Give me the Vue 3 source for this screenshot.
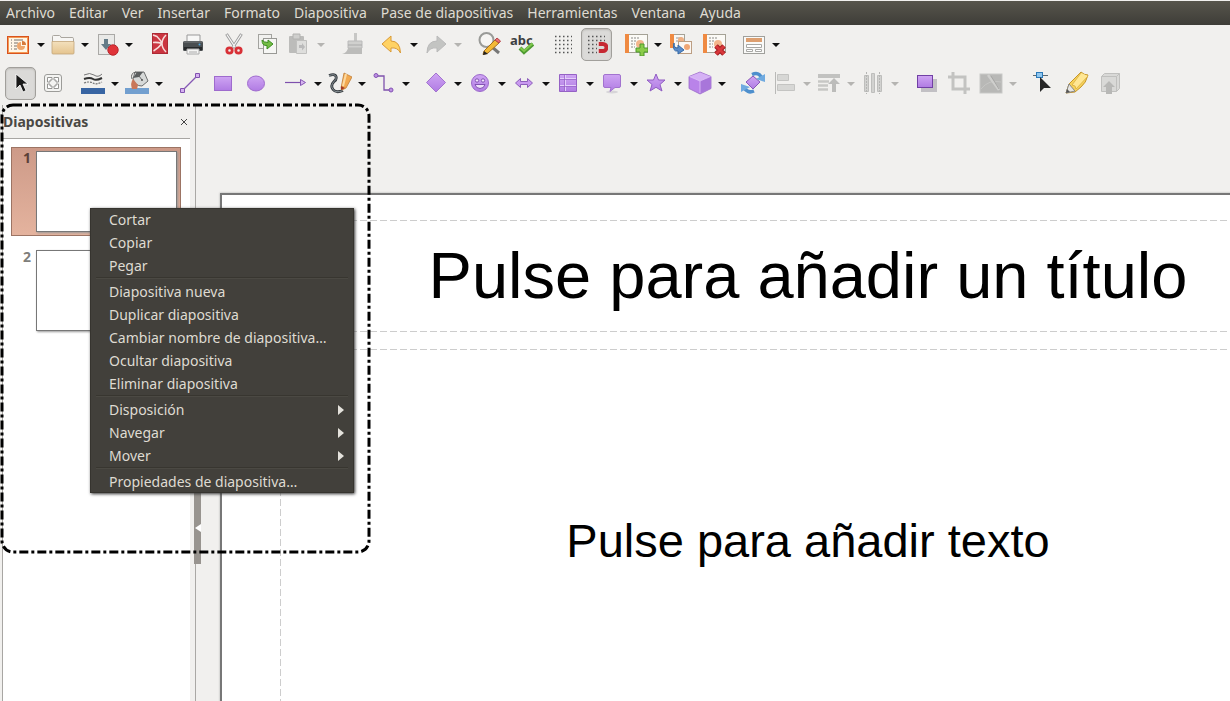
<script setup>
import { h } from 'vue'

const menus = ['Archivo', 'Editar', 'Ver', 'Insertar', 'Formato', 'Diapositiva', 'Pase de diapositivas', 'Herramientas', 'Ventana', 'Ayuda']

const slidePage = '<rect x="2.5" y="2.5" width="21" height="18" fill="#fbfaf6" stroke="#a5a296"/><rect x="1" y="2" width="4" height="19" fill="#ef8a42"/><path d="M7 6h9M7 9h6M7 12h4M7 15h4" stroke="#8b8a87" stroke-dasharray="2 1"/><circle cx="16" cy="12" r="4" fill="#f3b68c"/>'

const icons = {
  impress: '<rect x="0" y="4" width="22" height="18" fill="#d9531e"/><rect x="1.500" y="5.500" width="19" height="15" fill="#fff6e6" stroke="#f39a55"/><path d="M4 8h1M4 11h1M4 14h1M4 17h1M7 8h9M7 11h4M7 14h3M7 17h3" stroke="#77706a" stroke-width="1.200"/><path d="M14 10a4 4 0 1 0 4 4h-4z" fill="#efa76c"/><path d="M15 9a4 4 0 0 1 4 4h-4z" fill="#d87a3a"/>',
  folder: '<path d="M1.500 20V4.500q0-1 1-1h6q1 0 1.500 2h11q1.500 0 1.500 1V20z" fill="#f7f6f4" stroke="#aaa69f"/><path d="M1 9.500h22V21q0 1-1 1H2q-1 0-1-1z" fill="url(#tan)" stroke="#c3a578" stroke-width=".8"/>',
  save: '<rect x="3.500" y="2.500" width="16" height="20" fill="#e9e9e7" stroke="#aaa9a6"/><path d="M9 7h4v5h3l-5 6-5-6h3z" fill="#637b87"/><circle cx="18" cy="18" r="5.200" fill="#e03338" stroke="#b8262c"/>',
  pdf: '<rect x="4.500" y="1.500" width="15" height="20" fill="#cb3540" stroke="#ad2a34"/><path d="M5 3l4 1.500q4 4 5 7-3 4-8.500 7.500M14 11.500q-4-1.500-9-1M18 3q-4 4-4 8.500t4 8.500" stroke="#f6dcda" fill="none" stroke-width="1.500"/>',
  printer: '<path d="M6 9V3h13v6" fill="#f7f7f6" stroke="#999"/><rect x="2" y="9" width="20" height="10" rx="1.500" fill="#4a4e50"/><path d="M3 10h18" stroke="#7b7f80"/><circle cx="18.500" cy="12.500" r="1" fill="#50a7dd"/><rect x="3" y="15" width="18" height="3" fill="#26292a"/><path d="M6 17h12v5H6z" fill="#f5f5f4" stroke="#aaa"/><path d="M8 20h8" stroke="#aaa"/>',
  cut: '<path d="M4.500 2l9 14M19.500 2l-9 14" stroke="#999" stroke-width="3"/><path d="M4.800 2.500l8.500 13M19.200 2.500l-8.500 13" stroke="#f5f5f5" stroke-width="1.300"/><circle cx="7.500" cy="18.500" r="2.700" fill="none" stroke="#d83036" stroke-width="2.800"/><circle cx="16.500" cy="18.500" r="2.700" fill="none" stroke="#d83036" stroke-width="2.800"/>',
  copy: '<rect x="3.500" y="2.500" width="13" height="14" fill="#f1f1ef" stroke="#a3a39f"/><rect x="8.500" y="6.500" width="13" height="15" fill="#f6f6f4" stroke="#999995"/><path d="M7 8q0 6 5 5.500V17l6-5-5-4v2.500q-4 0-6-2.500z" fill="#73bd45" stroke="#3d8e22"/>',
  paste: '<rect x="2" y="4" width="15" height="17" rx="1" fill="#bcbcba"/><path d="M6 2h7v5H6z" fill="#cfcfcd" stroke="#b2b2b0"/><path d="M9.500 8.500h10v13h-10z" fill="#dededc" stroke="#c0c0be"/><path d="M12 13h3v-2l3 4-3 3.500V16h-3z" fill="#bababa"/>',
  brush: '<path d="M14 1h3v9h-3z" fill="#c7c7c5"/><path d="M8 9h14v7H8z" fill="#d0d0ce" stroke="#bababa"/><path d="M8 13h14" stroke="#aaa"/><path d="M8 16h14v6H2q5-1 6-6z" fill="#bcbcba"/>',
  undo: '<path d="M2 12l9-8v5q9 0 9.500 12-3-6-9.500-5v4z" fill="#ffd264" stroke="#d99a37" stroke-linejoin="round"/>',
  redo: '<path d="M22 12l-9-8v5Q3 9 3 21q3-6 10-5v4z" fill="#c3c4c2" stroke="#bababa" stroke-linejoin="round"/>',
  find: '<circle cx="9.500" cy="8" r="7" fill="#f6f5f3" stroke="#9a9b98" stroke-width="2"/><path d="M15 15l7 6" stroke="#777" stroke-width="3"/><path d="M7 19L18 8l4 3-11 10-5 1.500z" fill="#f3b936" stroke="#a66e20"/><path d="M18 8l4 3 1.500-2L20 6z" fill="#ed6f70" stroke="#b4484b"/><path d="M7 19l4 3-5 1z" fill="#24221f"/>',
  spell: '<text x="0" y="13" font-family="Noto Sans, sans-serif" font-size="13" font-weight="700" fill="#3c3e41">abc</text><path d="M10 16l4 4 9-8" fill="none" stroke="#4f9b32" stroke-width="4"/><path d="M10.500 16l3.500 3 8.500-7.500" fill="none" stroke="#80c94c" stroke-width="2"/>',
  grid: '<path d="M4 4.500h17M4 8.500h17M4 12.500h17M4 16.500h17M4 20.500h17" stroke="#555" stroke-width="1.500" stroke-dasharray="1.500 2.500"/>',
  snap: '<path d="M4 4.500h17M4 8.500h17M4 12.500h9M4 16.500h9M4 20.500h9" stroke="#555" stroke-width="1.500" stroke-dasharray="1.500 2.500"/><path d="M14 12h5a3.500 3.500 0 0 1 0 7h-5" fill="none" stroke="#c62832" stroke-width="4"/><path d="M14 10v4M14 17v4" stroke="#e7dcda" stroke-width="1.500"/>',
  slideAdd: slidePage + '<path d="M16 12h4v4h4v4h-4v4h-4v-4h-4v-4h4z" fill="#8bcb49" stroke="#4c992d"/>',
  slideDup: '<rect x="1.500" y="2.500" width="14" height="13" fill="#f9f7f4" stroke="#a5a296"/><path d="M1 2h4v14H1z" fill="#ef8a42"/><path d="M7 6h6M7 9h3" stroke="#999"/><circle cx="12" cy="8" r="3" fill="#efb083"/><rect x="9.500" y="9.500" width="13" height="12" fill="#fbf7f3" stroke="#bc9e83"/><circle cx="18" cy="15" r="3" fill="#efa675"/><path d="M5 11q0 6 4 5v-3l6 5-6 4v-3q-6 1-4-8z" fill="#5b8bc9" stroke="#346aa8"/>',
  slideDel: slidePage + '<path d="M14 14l8 8m0-8l-8 8" stroke="#9e1d20" stroke-width="5"/><path d="M14 14l8 8m0-8l-8 8" stroke="#d8373a" stroke-width="3"/>',
  layout: '<rect x="1.500" y="4.500" width="21" height="17" fill="#fafaf8" stroke="#a0a09c"/><path d="M4 6h16v4H4z" fill="#dd9f70"/><path d="M4.500 12.500h15v3h-15zM4.500 17.500h6v2h-6zM13.500 17.500h6v2h-6z" fill="#fff" stroke="#a8a8a5"/>',
  select: '<path d="M8 3v15l4-4 3 7 3-1.500-3-6.500h5z" fill="#181818" stroke="#fff" stroke-width=".8"/>',
  zoompan: '<rect x="3.500" y="3.500" width="17" height="17" rx="2.500" fill="#f4f4f2" stroke="#9c9c99"/><path d="M6.500 11V6.500H11v2.500H9v2zM13 6.500h4.500V11H15V9h-2zM6.500 13v4.500H11V15H9v-2zM17.500 13v4.500H13V15h2v-2z" fill="#fff" stroke="#8a8a88" stroke-width=".9"/>',
  linecolor: '<path d="M3 4q6-3 10 0t8-1" stroke="#777" fill="none"/><path d="M3 8q6-2 9 0t9-1" stroke="#333" fill="none" stroke-width="2"/><path d="M3 12q6-2 9 0t9-1" stroke="#777" fill="none" stroke-width="1.200" stroke-dasharray="2 1"/><path d="M0 17h24v6H0z" fill="#3865a3"/>',
  fill: '<path d="M0 17h24v6H0z" fill="#729fcf"/><path d="M10 1h9l4 9-6 5q-7 0-9-7z" fill="#d7d9d8" stroke="#6c6e6e"/><path d="M8 7l4-6 6 0-4 5z" fill="#5a5d5e"/><path d="M7 8Q5 2 11 1l6 8" fill="none" stroke="#666"/><circle cx="17" cy="9" r="1" fill="#555"/><path d="M8 8q-3 4-1 10h5l1-4z" fill="#c9775a"/>',
  line: '<path d="M4 20L20 4" stroke="#8558b4" stroke-width="1.300"/><path d="M2.500 17.500h4v4h-4zM17.500 2.500h4v4h-4z" fill="#d5b1f0" stroke="#8252b0"/>',
  rect: '<rect x="3.500" y="5.500" width="17" height="14" fill="url(#vio)" stroke="#9e6bcd"/>',
  ellipse: '<ellipse cx="12" cy="12.500" rx="8.500" ry="7.500" fill="url(#vio)" stroke="#a06dce"/>',
  arrow: '<path d="M1 11.500h15" stroke="#7e50ad" stroke-width="1.200"/><path d="M16.500 8.500l5 3-5 3z" fill="#d7b7ef" stroke="#8555b5"/>',
  curve: '<path d="M1 4.500q6-2 7 1t-2 5q-4 4-1 8t10 1" fill="none" stroke="#34393d" stroke-width="2.800"/><path d="M1 4.500q6-2 7 1t-2 5q-4 4-1 8t10 1" fill="none" stroke="#8d969b"/><path d="M13 17l3-15 8 4-6 11-4 2z" fill="#f2a950" stroke="#c07d38" stroke-width=".8"/><path d="M18 3l-3 12" stroke="#fbd9a0" stroke-width="2"/><path d="M13 15v4l4-2z" fill="#a33a25"/>',
  connector: '<path d="M5 5h7v14h7" fill="none" stroke="#7f52ad" stroke-width="1.300"/><circle cx="4" cy="4.500" r="2" fill="#bd91e2" stroke="#8352b3"/><circle cx="19" cy="19" r="2" fill="#bd91e2" stroke="#8352b3"/>',
  diamond: '<path d="M12 2l9.500 9.500L12 21l-9.500-9.500z" fill="url(#vio)" stroke="#a374cf"/>',
  smiley: '<circle cx="12" cy="12" r="8.500" fill="url(#vio)" stroke="#9c69cb"/><circle cx="9" cy="9.500" r="1.700" fill="#f1e5fb" stroke="#8352b3"/><circle cx="15" cy="9.500" r="1.700" fill="#f1e5fb" stroke="#8352b3"/><path d="M7 13.500h10q-1 4-5 4t-5-4z" fill="#eee1fa" stroke="#8352b3"/>',
  dblarrow: '<path d="M3.500 12l5-4.500v3h7v-3l5 4.500-5 4.500v-3h-7v3z" fill="#c99af0" stroke="#8d5fbb"/>',
  table: '<path d="M3.500 3.500h17v17h-17z" fill="url(#vio)" stroke="#9562c5"/><path d="M4 7.500h16M4 14.500h16M9.500 4v16" stroke="#e5cefa"/><path d="M4 8.500h16M4 15.500h16M8.500 4v16" stroke="#9562c5" stroke-width=".7"/>',
  callout: '<ellipse cx="12" cy="21" rx="6" ry="1.500" fill="#d7d5d8"/><path d="M5 3.500h14q1.500 0 1.500 1.500v10q0 1.500-1.500 1.500h-4l-5 4 1-4H5q-1.500 0-1.500-1.500V5q0-1.500 1.500-1.500z" fill="url(#vio)" stroke="#a273cf"/>',
  star: '<path d="M12 3l2.500 6h6.500l-5 4.500 2 6.500-6-3.700L6 20l2-6.500L3 9h6.500z" fill="url(#vio)" stroke="#905dc2"/>',
  cube: '<path d="M12 1L23 5.500v12L12 23 1 17.500v-12z" fill="#b983e9" stroke="#9b6bc9" stroke-width=".8"/><path d="M12 1.500l10.500 4L12 10 1.500 5.500z" fill="#d5b1f5"/><path d="M12 10l10.500-4.500v12L12 22.500z" fill="#a876da"/><path d="M1.500 5.500L12 10v12M12 10l10.500-4.500" stroke="#dfc3f8" fill="none" stroke-width=".8"/>',
  rotate: '<path d="M12 5l7 6-7 7-7-7z" fill="url(#vio)" stroke="#8857b7"/><path d="M11 3.500q7-3 10 4" fill="none" stroke="#4e8fcd" stroke-width="3.500"/><path d="M15 8l9 3V3z" fill="#6faae0"/><path d="M13 20q-7 3-10-4" fill="none" stroke="#4e8fcd" stroke-width="3.500"/><path d="M9 16l-9-3v8z" fill="#6faae0"/>',
  align: '<path d="M2.500 1v22" stroke="#b9b9b7"/><path d="M4.500 3.500h11v6h-11zM4.500 13.500h17v6h-17z" fill="#d7d7d5" stroke="#c4c4c2"/>',
  arrange: '<path d="M1 3h22v4H1z" fill="#c2c2c0"/><path d="M1 10.500h11M1 14.500h10M1 18.500h10" stroke="#c7c7c5" stroke-width="2.500"/><path d="M17 7l6 6h-4v8h-4v-8h-4z" fill="#bcbcba"/>',
  distribute: '<path d="M3.500 4.500h4v16h-4zM10.500 2.500h3v19h-3zM16.500 4.500h4v16h-4z" fill="#d2d2d0" stroke="#bebebc"/><path d="M5.500 1v22M18.500 1v22" stroke="#b5b5b3" stroke-dasharray="2 1"/>',
  shadow: '<path d="M7 8h16v13H7z" fill="#c2c0c4"/><rect x="3.500" y="4.500" width="15" height="12" fill="url(#vio)" stroke="#7140a4"/>',
  crop: '<path d="M6 1v17h17M1 6h17v17" fill="none" stroke="#c3c3c1" stroke-width="3"/>',
  filter: '<rect x="1" y="3" width="22" height="19" fill="#b8b8b6" stroke="#c9c9c7"/><path d="M2 18q8-10 20-7" stroke="#c6c6c4" fill="none"/><path d="M9 4l11 15" stroke="#cfcfcd" stroke-width="2.500"/><path d="M12 5l8 13" stroke="#a7a7a5"/>',
  points: '<path d="M1 4.500h15" stroke="#5e6a70"/><rect x="4.500" y="1.500" width="6" height="5" fill="#8fc6ee" stroke="#2c79b8"/><path d="M8 6v15l4-4h7z" fill="#272727"/>',
  glue: '<path d="M1 22l3-9L16 1q3 3 7 3-2 8-7 12l-6 5z" fill="#f7d35b" stroke="#c5962d"/><path d="M16 2l-9 12q4 0 4 4L23 5" fill="#ffe794" stroke="#d6a83a" stroke-width=".7"/><path d="M4 13l6 7-9 2z" fill="#e6e5e1" stroke="#888"/><path d="M1 22l1-4 3 3z" fill="#555"/>',
  extrude: '<path d="M3.500 5.500l3-3h15v15l-3 3h-15z" fill="#d9d9d7" stroke="#c0c0be"/><path d="M3.500 5.500h15v15M18.500 5.500l3-3" fill="none" stroke="#c0c0be"/><path d="M11 10l6 6h-3v7H8v-7H5z" fill="#b8b8b6"/>',
}

const t = (icon, label, o = '') => ({ icon, label, split: o.includes('s'), off: o.includes('o'), on: o.includes('p') })

const toolbars = [
  {
    name: 'Estándar',
    groups: [
      [t('impress', 'Nuevo', 's'), t('folder', 'Abrir', 's'), t('save', 'Guardar', 's')],
      [t('pdf', 'Exportar a PDF'), t('printer', 'Imprimir')],
      [t('cut', 'Cortar'), t('copy', 'Copiar'), t('paste', 'Pegar', 'so')],
      [t('brush', 'Clonar formato', 'o')],
      [t('undo', 'Deshacer', 's'), t('redo', 'Rehacer', 'so')],
      [t('find', 'Buscar y reemplazar'), t('spell', 'Ortografía')],
      [t('grid', 'Mostrar cuadrícula'), t('snap', 'Ajustar a la cuadrícula', 'p')],
      [t('slideAdd', 'Diapositiva nueva', 's'), t('slideDup', 'Duplicar diapositiva'), t('slideDel', 'Eliminar diapositiva')],
      [t('layout', 'Disposición', 's')],
    ],
  },
  {
    name: 'Dibujo',
    groups: [
      [t('select', 'Seleccionar', 'p'), t('zoompan', 'Escala y desplazamiento')],
      [t('linecolor', 'Color de línea', 's'), t('fill', 'Color de relleno', 's')],
      [t('line', 'Línea'), t('rect', 'Rectángulo'), t('ellipse', 'Elipse')],
      [t('arrow', 'Líneas y flechas', 's'), t('curve', 'Curva', 's'), t('connector', 'Conector', 's')],
      [t('diamond', 'Formas básicas', 's'), t('smiley', 'Símbolos', 's'), t('dblarrow', 'Flechas de bloque', 's'), t('table', 'Diagramas de flujo', 's'), t('callout', 'Llamadas', 's'), t('star', 'Estrellas', 's'), t('cube', 'Objetos 3D', 's')],
      [t('rotate', 'Girar'), t('align', 'Alinear', 'so'), t('arrange', 'Organizar', 'so'), t('distribute', 'Distribuir', 'so')],
      [t('shadow', 'Sombra'), t('crop', 'Recortar', 'o'), t('filter', 'Filtro', 'so')],
      [t('points', 'Puntos'), t('glue', 'Puntos de adhesión'), t('extrude', 'Extrusión', 'o')],
    ],
  },
]

const Icon = (props) => h('svg', { width: 24, height: 24, viewBox: '0 0 24 24', fill: 'none', 'aria-hidden': 'true', innerHTML: icons[props.name] })
Icon.props = ['name']

const slides = [{ n: 1, selected: true }, { n: 2, selected: false }]

const contextMenu = [
  [{ text: 'Cortar' }, { text: 'Copiar' }, { text: 'Pegar' }],
  [{ text: 'Diapositiva nueva' }, { text: 'Duplicar diapositiva' }, { text: 'Cambiar nombre de diapositiva…' }, { text: 'Ocultar diapositiva' }, { text: 'Eliminar diapositiva' }],
  [{ text: 'Disposición', sub: true }, { text: 'Navegar', sub: true }, { text: 'Mover', sub: true }],
  [{ text: 'Propiedades de diapositiva…' }],
]
</script>

<template>
  <div class="app">
    <svg class="defs" width="0" height="0" aria-hidden="true">
      <defs>
        <linearGradient id="vio" x1="0" y1="0" x2="0" y2="1">
          <stop offset="0" stop-color="#cfa5f3" />
          <stop offset="1" stop-color="#b07be3" />
        </linearGradient>
        <linearGradient id="tan" x1="0" y1="0" x2="0" y2="1">
          <stop offset="0" stop-color="#f3e0bd" />
          <stop offset="1" stop-color="#e5c48e" />
        </linearGradient>
      </defs>
    </svg>

    <nav class="menubar" aria-label="Menú principal">
      <button v-for="m in menus" :key="m" type="button">{{ m }}</button>
    </nav>

    <div class="toolbars">
      <div v-for="bar in toolbars" :key="bar.name" class="toolbar" role="toolbar" :aria-label="bar.name">
        <div v-for="(group, g) in bar.groups" :key="g" class="group">
          <div v-for="tool in group" :key="tool.icon" class="tool" :class="{ split: tool.split }">
            <button type="button" class="main" :class="{ pressed: tool.on }" :disabled="tool.off" :aria-label="tool.label">
              <Icon :name="tool.icon" />
            </button>
            <button v-if="tool.split" type="button" class="drop" :disabled="tool.off" :aria-label="tool.label + ': más opciones'">
              <span class="caret"></span>
            </button>
          </div>
        </div>
      </div>
    </div>

    <div class="body">
      <aside class="panel">
        <header>
          <h2>Diapositivas</h2>
          <button type="button" class="close" aria-label="Cerrar">
            <svg width="8" height="8" viewBox="0 0 8 8"><path d="M1 1l6 6M7 1L1 7" stroke="#444" /></svg>
          </button>
        </header>
        <ul class="slides">
          <li v-for="s in slides" :key="s.n" :class="{ selected: s.selected }">
            <span class="num">{{ s.n }}</span>
            <div class="thumb"></div>
          </li>
        </ul>
      </aside>

      <div class="splitter">
        <button type="button" aria-label="Ocultar panel">
          <svg width="6" height="8" viewBox="0 0 6 8"><path d="M6 0v8L0 4z" fill="#fff" /></svg>
        </button>
      </div>

      <main class="workspace">
        <section class="slide">
          <div class="box title"><h1>Pulse para añadir un título</h1></div>
          <div class="box content"><p>Pulse para añadir texto</p></div>
        </section>
      </main>

      <div class="context" role="menu">
        <div v-for="(section, i) in contextMenu" :key="i" class="section">
          <button v-for="item in section" :key="item.text" type="button" role="menuitem">
            <span>{{ item.text }}</span>
            <svg v-if="item.sub" width="6" height="10" viewBox="0 0 6 10"><path d="M0 0l6 5-6 5z" fill="#e4e2dc" /></svg>
          </button>
        </div>
      </div>

      <svg class="highlight" aria-hidden="true">
        <rect x="2" y="2" width="367" height="447" rx="11" fill="none" stroke="#000" stroke-width="3" stroke-dasharray="9 3 3 3" />
      </svg>
    </div>
  </div>
</template>

<style>
body {
  margin: 0;
  background: #f1f0ee;
}
</style>

<style scoped>
.app {
  display: flex;
  flex-direction: column;
  height: 100vh;
  overflow: hidden;
  background: #f1f0ee;
  font-family: "Noto Sans", "Open Sans", sans-serif;
  font-size: 14px;
}
.defs {
  position: absolute;
}
button {
  border: 0;
  padding: 0;
  background: none;
  font: inherit;
  color: inherit;
}
.menubar {
  display: flex;
  gap: 14px;
  flex: none;
  box-sizing: border-box;
  height: 25px;
  padding: 0 6px 2px;
  border-top: 1px solid #f1f0ee;
  background: linear-gradient(#57554c, #3e3d38);
  color: #dfdbd2;
}
.menubar button {
  white-space: nowrap;
}
.toolbars {
  flex: none;
  padding-bottom: 2px;
}
.toolbar {
  display: flex;
  gap: 8px;
  height: 39px;
  padding-left: 4px;
  align-items: center;
}
.group,
.tool {
  display: flex;
  align-items: center;
}
.main {
  display: flex;
  align-items: center;
  justify-content: center;
  box-sizing: border-box;
  width: 31px;
  height: 33px;
  margin: 0 1px;
  padding: 0 1px 1px 0;
  border: 1px solid transparent;
  border-radius: 5px;
}
.split .main {
  margin: 0;
}
.pressed {
  border-color: #a19f9b;
  background: #dbdad8;
  box-shadow: inset 0 1px 2px #bbb9b5;
}
.drop {
  display: flex;
  justify-content: center;
  box-sizing: border-box;
  width: 13px;
  padding-right: 1px;
}
.caret {
  border: 4px solid transparent;
  border-top-color: #111;
  border-bottom: 0;
}
.drop:disabled .caret {
  border-top-color: #b5b4b1;
}
.body {
  position: relative;
  display: flex;
  flex: 1;
  min-height: 0;
}
.panel {
  flex: none;
  width: 187px;
  margin-left: 2px;
  border-left: 1px solid #a8a6a3;
  background: #fff;
}
.panel header {
  display: flex;
  justify-content: space-between;
  align-items: center;
  box-sizing: border-box;
  height: 34px;
  padding-right: 2px;
  border-bottom: 1px solid #a8a6a3;
  background: #f1f0ee;
}
h2 {
  margin: 0;
  font-size: 14px;
  line-height: 20px;
  color: #4a4844;
}
.close {
  display: flex;
}
.slides {
  display: flex;
  flex-direction: column;
  gap: 10px;
  margin: 0;
  padding: 8px 9px 8px 8px;
  list-style: none;
}
.slides li {
  display: flex;
  box-sizing: border-box;
  height: 89px;
  padding: 3px;
  border: 1px solid transparent;
}
.slides li.selected {
  border-color: #9c7464;
  background: linear-gradient(#cd9a88, #e4b39e);
}
.num {
  width: 16px;
  margin-right: 5px;
  font-weight: 700;
  font-size: 14px;
  line-height: 14px;
  text-align: right;
  color: #807e7b;
}
.selected .num {
  color: #5b4038;
}
.thumb {
  flex: 1;
  box-sizing: border-box;
  border: 1px solid #777;
  background: #fff;
  box-shadow: 1px 1px 2px #999;
}
.splitter {
  position: relative;
  flex: none;
  width: 12px;
}
.splitter::before {
  content: "";
  position: absolute;
  left: 5px;
  top: 0;
  bottom: 0;
  width: 1px;
  background: #aaa8a5;
}
.splitter button {
  position: absolute;
  top: 386px;
  left: 4px;
  display: flex;
  align-items: center;
  justify-content: center;
  width: 7px;
  height: 73px;
  background: #98948f;
}
.workspace {
  flex: 1;
  min-width: 0;
  overflow: hidden;
  padding: 88px 0 0 18px;
}
.slide {
  box-sizing: border-box;
  width: 1176px;
  height: 882px;
  border: 2px solid #777;
  background: #fff;
  box-shadow: 0 0 2px #aaa;
  padding: 25px 58px;
  font-family: "Liberation Sans", Arial, sans-serif;
  color: #000;
}
.box {
  --h: repeating-linear-gradient(90deg, #cdcdcd 0 7px, transparent 7px 10px);
  --v: repeating-linear-gradient(#cdcdcd 0 7px, transparent 7px 10px);
  display: flex;
  align-items: center;
  justify-content: center;
  box-sizing: border-box;
  background: var(--h) top / 100% 1px no-repeat, var(--h) bottom / 100% 1px no-repeat,
    var(--v) left / 1px 100% no-repeat, var(--v) right / 1px 100% no-repeat;
}
.title {
  height: 112px;
  margin-bottom: 17px;
  padding-bottom: 2px;
}
.content {
  height: 382px;
}
h1,
p {
  margin: 0;
  font-weight: 400;
  white-space: nowrap;
}
h1 {
  font-size: 65px;
}
p {
  font-size: 47px;
}
.context {
  position: absolute;
  left: 90px;
  top: 103px;
  width: 264px;
  background: #42403b;
  color: #dfdbd2;
  box-shadow: 0 0 0 1px #36342f inset, 1px 1px 3px #333;
}
.section {
  display: flex;
  flex-direction: column;
}
.section + .section::before {
  content: "";
  height: 1px;
  margin: 0 6px 1px;
  border-top: 1px solid #383630;
  background: #4b4943;
}
.section button {
  display: flex;
  align-items: center;
  justify-content: space-between;
  height: 23px;
  padding: 0 10px 0 19px;
  text-align: left;
  white-space: nowrap;
}
.highlight {
  position: absolute;
  left: 0;
  top: -2px;
  width: 371px;
  height: 451px;
}
</style>
